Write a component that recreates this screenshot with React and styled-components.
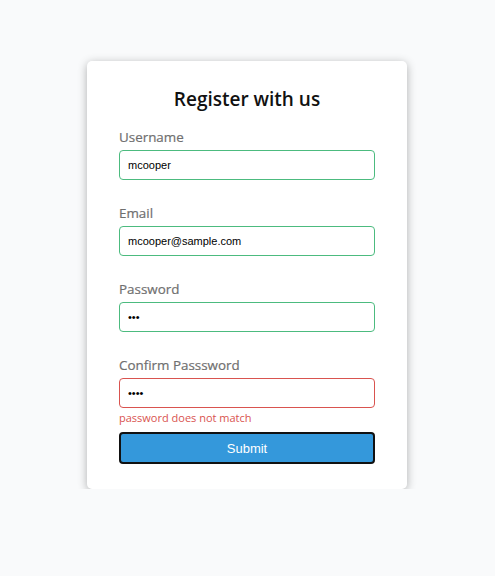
import React from 'react';
import styled, { createGlobalStyle } from 'styled-components';

const GlobalStyle = createGlobalStyle`
  * {
    box-sizing: border-box;
  }

  body {
    margin: 0;
    padding: 61px 1px 0 0;
    background-color: #f9fafb;
    font-family: 'Open Sans', 'Noto Sans', sans-serif;
  }
`;

const Container = styled.div`
  width: 320px;
  margin: 0 auto;
  padding: 25px 32px;
  background-color: #fff;
  border-radius: 5px;
  box-shadow: 0 2px 10px rgba(0, 0, 0, 0.3);
`;

const Title = styled.h2`
  margin: 0 0 15px;
  font-size: 19px;
  line-height: 27px;
  font-weight: 600;
  text-align: center;
  color: #111;
`;

const FormControl = styled.div`
  display: flex;
  flex-direction: column;
  padding-bottom: 6px;
`;

const Label = styled.label`
  display: block;
  margin-bottom: 3px;
  font-size: 13.4px;
  line-height: 19px;
  font-weight: 400;
  color: #6f6f6f;
  -webkit-text-stroke: 0.2px #6f6f6f;
`;

const Input = styled.input`
  display: block;
  width: 100%;
  height: 30px;
  padding: 0 8px;
  border: 1px solid ${(props) => (props.error ? '#d9534f' : '#4cbb7f')};
  border-radius: 4px;
  font-family: 'Liberation Sans', Arial, sans-serif;
  font-size: 11px;
  color: #000;
  outline: none;
`;

const Small = styled.small`
  display: block;
  margin-top: 1px;
  font-size: 11px;
  line-height: 17px;
  color: #d9534f;
  visibility: ${(props) => (props.show ? 'visible' : 'hidden')};
`;

const Button = styled.button`
  display: block;
  width: 100%;
  height: 32px;
  background-color: #3498db;
  border: 2px solid #111;
  border-radius: 4px;
  color: #fff;
  font-family: 'Liberation Sans', Arial, sans-serif;
  font-size: 13px;
  cursor: pointer;
`;

const fields = [
  { id: 'username', label: 'Username', type: 'text', value: 'mcooper' },
  { id: 'email', label: 'Email', type: 'text', value: 'mcooper@sample.com' },
  { id: 'password', label: 'Password', type: 'password', value: 'abc' },
  {
    id: 'password2',
    label: 'Confirm Passsword',
    type: 'password',
    value: 'abcd',
    error: 'password does not match',
  },
];

export default function App() {
  return (
    <>
      <GlobalStyle />
      <Container>
        <Title>Register with us</Title>
        <form onSubmit={(e) => e.preventDefault()}>
          {fields.map((f) => (
            <FormControl key={f.id}>
              <Label htmlFor={f.id}>{f.label}</Label>
              <Input
                id={f.id}
                type={f.type}
                defaultValue={f.value}
                error={f.error ? 1 : 0}
              />
              <Small show={f.error ? 1 : 0}>{f.error || 'Error message'}</Small>
            </FormControl>
          ))}
          <Button type="submit">Submit</Button>
        </form>
      </Container>
    </>
  );
}
